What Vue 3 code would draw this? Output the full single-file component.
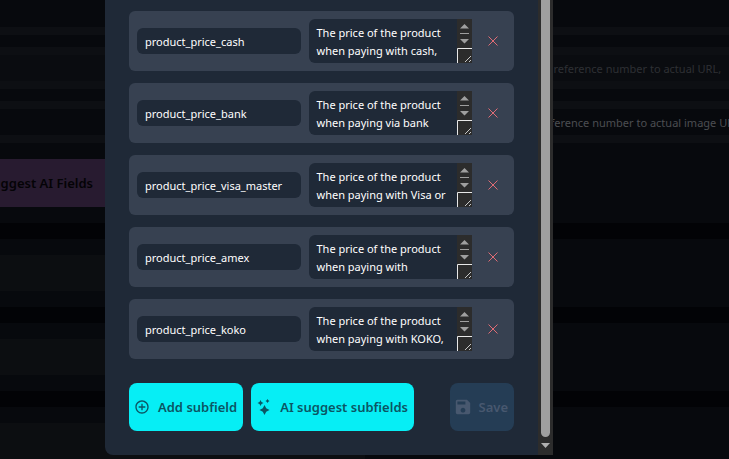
<template>
  <div class="page">
    <main class="backdrop">
      <section class="panel">
        <div class="field-row">
          <input class="field" aria-label="Field name">
          <input class="field" aria-label="Field description">
        </div>
        <div v-for="field in fields" :key="field.description" class="field-row" :class="{ muted: field.muted }">
          <input class="field" aria-label="Field name">
          <input v-model="field.description" class="field" aria-label="Field description">
        </div>
        <button type="button" class="suggest-fields">Suggest AI Fields</button>
      </section>
      <section v-for="n in 3" :key="n" class="panel section">
        <div class="section-bar"></div>
      </section>
    </main>

    <div class="overlay">
      <div class="modal" role="dialog" aria-label="Subfields">
        <div class="content">
          <div class="rows">
            <div v-for="(item, index) in subfields" :key="item.id" class="subfield">
              <input v-model="item.name" class="name" aria-label="Subfield name" spellcheck="false">
              <div class="description">
                <textarea v-model="item.description" aria-label="Subfield description" rows="2" spellcheck="false"></textarea>
                <svg class="text-scroll" width="15" height="44" viewBox="0 0 15 44" aria-hidden="true">
                  <rect width="15" height="44" fill="#2c2c2c" />
                  <path d="M3 9.5 7.5 5 12 9.5zM3 20h9l-4.500 4.500z" fill="#9f9f9f" />
                  <path d="M3 14.500h9" stroke="#9f9f9f" />
                  <path d="M.5 44V29.500H15" fill="none" stroke="#e8e8e8" />
                  <path d="m8 43 6-6m-2 6 2-2" stroke="#c8c8c8" />
                </svg>
              </div>
              <button type="button" class="remove" aria-label="Remove subfield" @click="removeSubfield(index)">
                <svg width="10" height="10" viewBox="0 0 10 10">
                  <path d="m.5.5 9 9m0-9-9 9" stroke="currentColor" />
                </svg>
              </button>
            </div>
          </div>

          <div class="actions">
            <button type="button" class="action" @click="addSubfield">
              <svg width="16" height="16" viewBox="0 0 24 24" fill="currentColor">
                <path d="M13 7h-2v4H7v2h4v4h2v-4h4v-2h-4V7zm-1-5C6.480 2 2 6.480 2 12s4.480 10 10 10 10-4.480 10-10S17.520 2 12 2zm0 18c-4.410 0-8-3.590-8-8s3.590-8 8-8 8 3.590 8 8-3.590 8-8 8z" />
              </svg>
              Add subfield
            </button>
            <button type="button" class="action">
              <svg width="16" height="16" viewBox="0 0 16 16" fill="currentColor">
                <path d="m8.500 6 1.700 3.300 3.300 1.700-3.300 1.700L8.500 16l-1.700-3.300L3.500 11l3.300-1.700zM4.500 1l1 2 2 1-2 1-1 2-1-2-2-1 2-1zM11.500 0l.8 1.200 1.200.8-1.200.8-.8 1.200-.8-1.200L9.500 2l1.200-.8z" />
              </svg>
              AI suggest subfields
            </button>
            <button type="button" class="action save" disabled>
              <svg width="16" height="16" viewBox="2 2 20 20" fill="currentColor">
                <path d="M17 3H5c-1.110 0-2 .9-2 2v14c0 1.100.89 2 2 2h14c1.100 0 2-.9 2-2V7l-4-4zm-5 16c-1.660 0-3-1.340-3-3s1.340-3 3-3 3 1.340 3 3-1.340 3-3 3zm3-10H5V5h10v4z" />
              </svg>
              Save
            </button>
          </div>
        </div>
        <div class="scrollbar" aria-hidden="true">
          <div class="thumb"></div>
          <svg width="9" height="5" viewBox="0 0 9 5">
            <path d="M0 0h9L4.500 5z" fill="#b0b0b0" />
          </svg>
        </div>
      </div>
    </div>
  </div>
</template>

<script setup>
import { ref } from 'vue';

const fields = ref([
  { description: 'to reference number to actual URL,', muted: true },
  { description: 'reference number to actual image URL', muted: false }
]);

const subfields = ref([
  { id: 1, name: 'product_price_cash', description: 'The price of the product when paying with cash,' },
  { id: 2, name: 'product_price_bank', description: 'The price of the product when paying via bank' },
  { id: 3, name: 'product_price_visa_master', description: 'The price of the product when paying with Visa or' },
  { id: 4, name: 'product_price_amex', description: 'The price of the product when paying with' },
  { id: 5, name: 'product_price_koko', description: 'The price of the product when paying with KOKO,' }
]);

let nextId = 6;

function addSubfield() {
  subfields.value.push({ id: nextId++, name: '', description: '' });
}

function removeSubfield(index) {
  subfields.value.splice(index, 1);
}
</script>

<style>
body {
  background: #020306;
}
</style>

<style scoped>
* {
  box-sizing: border-box;
}

.page {
  position: relative;
  height: 100vh;
  overflow: hidden;
  font-family: "Noto Sans", "Open Sans", sans-serif;
  font-size: 11px;
}

button,
input,
textarea {
  margin: 0;
  border: 0;
  outline: 0;
  font: inherit;
}

/* Dimmed page */
.backdrop {
  display: flex;
  flex-direction: column;
  gap: 16px;
}

.panel {
  display: flex;
  flex-direction: column;
  gap: 12px;
  padding-bottom: 16px;
  background: #07090d;
}

.field-row {
  display: grid;
  grid-template-columns: 528px 1fr;
  padding: 8px 0;
  background: #0d0f13;
}

.field-row:first-child {
  padding-top: 0;
}

.field {
  min-width: 0;
  height: 26px;
  padding: 0 0 0 12px;
  background: #07090d;
  color: #4c4e52;
}

.field-row:first-child .field {
  height: 27px;
}

.muted .field {
  background: #0a0c10;
  color: #2e3034;
}

.suggest-fields {
  display: flex;
  align-items: center;
  justify-content: flex-end;
  width: 105px;
  height: 48px;
  margin-top: 4px;
  padding: 0 12px;
  overflow: hidden;
  background: #281b30;
  color: #040306;
  font-size: 13px;
  font-weight: 600;
  white-space: nowrap;
}

.section {
  padding: 16px 0;
}

.section-bar {
  width: 50%;
  height: 36px;
  background: #0c0e11;
}

/* Dialog */
.overlay {
  position: absolute;
  inset: 0;
  padding: 0 176px 0 105px;
}

.modal {
  display: flex;
  overflow: hidden;
  border-radius: 0 0 0 8px;
  background: #1f2937;
}

.content {
  flex: 1;
  min-width: 0;
  padding: 11px 24px 24px;
}

.rows {
  display: flex;
  flex-direction: column;
  gap: 12px;
}

.subfield {
  display: grid;
  grid-template-columns: 1fr 1fr 26px;
  align-items: center;
  gap: 8px;
  padding: 8px;
  border-radius: 6px;
  background: #374151;
}

.name,
.description {
  min-width: 0;
  border-radius: 6px;
  background: #1f2937;
  color: #fff;
}

.name {
  height: 26px;
  padding: 0 8px;
}

.description {
  display: flex;
  height: 44px;
  overflow: hidden;
  border-radius: 6px 0 0 6px;
}

textarea {
  flex: 1;
  min-width: 0;
  padding: 5px 0 3px 8px;
  overflow: hidden;
  resize: none;
  background: transparent;
  color: #fff;
  line-height: 18px;
}

.text-scroll {
  flex: none;
}

.remove {
  display: flex;
  align-items: center;
  justify-content: center;
  width: 26px;
  height: 26px;
  padding: 0;
  background: transparent;
  color: #e06c75;
  cursor: pointer;
}

.actions {
  display: flex;
  gap: 8px;
  margin-top: 24px;
}

.action {
  display: flex;
  align-items: center;
  gap: 8px;
  height: 48px;
  padding: 0 6px 0 5px;
  border-radius: 8px;
  background: #06eef5;
  color: #0b5563;
  font-size: 13px;
  font-weight: 600;
  white-space: nowrap;
  cursor: pointer;
}

.save {
  margin-left: auto;
  background: #253d55;
  color: #48586f;
  cursor: default;
}

.scrollbar {
  display: flex;
  flex: none;
  flex-direction: column;
  align-items: center;
  gap: 6px;
  width: 15px;
  padding-bottom: 7px;
  background: #2c2c2c;
}

.thumb {
  flex: 1;
  width: 9px;
  border-radius: 0 0 5px 5px;
  background: #9f9f9f;
}
</style>
